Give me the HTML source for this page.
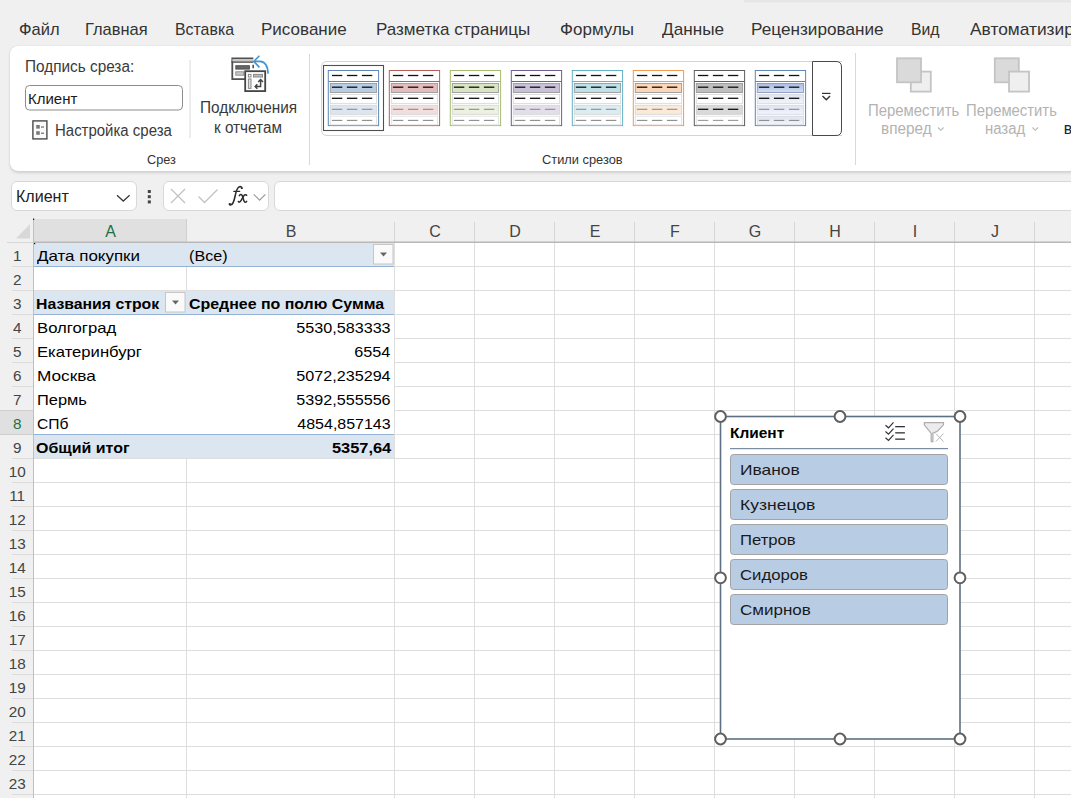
<!DOCTYPE html>
<html><head><meta charset="utf-8"><style>
html,body{margin:0;padding:0}
body{width:1071px;height:798px;overflow:hidden;position:relative;background:#f0f0f0;font-family:"Liberation Sans",sans-serif}
.abs{position:absolute}
.tx{position:absolute;white-space:nowrap;line-height:1.1172em}
svg{position:absolute;left:0;top:0}
</style></head><body>

<div class="abs" style="left:10px;top:46px;width:1100px;height:125px;background:#fff;border-radius:8px;box-shadow:0 1.5px 3px rgba(0,0,0,0.13),0 0 1px rgba(0,0,0,0.12)"></div>
<div class="abs" style="left:10.5px;top:181px;width:124.5px;height:28px;background:#fff;border:1px solid #d8d8d8;border-radius:6px"></div>
<div class="abs" style="left:162.5px;top:181px;width:104.5px;height:28px;background:#fff;border:1px solid #d8d8d8;border-radius:6px"></div>
<div class="abs" style="left:274px;top:181px;width:900px;height:28px;background:#fff;border:1px solid #d8d8d8;border-radius:6px"></div>
<svg width="1071" height="798" viewBox="0 0 1071 798"><defs><linearGradient id="g8a" x1="0" y1="0" x2="0" y2="1"><stop offset="0" stop-color="#a9bde6"/><stop offset="1" stop-color="#d5def2"/></linearGradient><linearGradient id="g8b" x1="0" y1="0" x2="0" y2="1"><stop offset="0" stop-color="#dde3f0"/><stop offset="1" stop-color="#f3f5fa"/></linearGradient></defs><rect x="744" y="0" width="327" height="2.5" fill="#e6e6e6"/>
<rect x="189.5" y="60" width="1" height="78" fill="#d9d9d9"/>
<rect x="309" y="54" width="1" height="111" fill="#d9d9d9"/>
<rect x="855" y="53" width="1" height="112" fill="#d9d9d9"/>
<rect x="25.5" y="85.5" width="157" height="24.5" rx="4" fill="#fff" stroke="#8c8c8c" stroke-width="1"/>
<rect x="32.9" y="120.9" width="14" height="18" fill="#fafafa" stroke="#4a4a4a" stroke-width="1.4"/>
<rect x="36.2" y="125" width="3.6" height="3.6" fill="#7a7a7a"/><rect x="36.2" y="131.2" width="3.6" height="3.6" fill="#7a7a7a"/>
<rect x="41" y="126.3" width="3" height="1.5" fill="#888"/><rect x="41" y="132.5" width="3" height="1.5" fill="#888"/>
<g>
<rect x="232.3" y="58.3" width="21" height="20.8" fill="#fff"/><path d="M253.3 58.3 H232.3 V79.1 H245" fill="none" stroke="#505050" stroke-width="1.8"/>
<rect x="232.3" y="59.2" width="21" height="2.2" fill="#c4c4c4"/>
<rect x="231.4" y="61.4" width="21.9" height="1.4" fill="#505050"/>
<rect x="235.8" y="65.7" width="13.6" height="3.4" fill="#666" stroke="#4a4a4a" stroke-width="0.9"/>
<rect x="235.8" y="71.8" width="8" height="3.4" fill="#c8c8c8" stroke="#8a8a8a" stroke-width="0.9"/>
<rect x="252.4" y="64.8" width="1.6" height="3.4" fill="#505050"/>
<rect x="245.2" y="71.2" width="20" height="19.9" fill="#fff" stroke="#444" stroke-width="1.8"/>
<rect x="248.4" y="74.4" width="2.6" height="2.6" fill="#fff" stroke="#8a8a8a" stroke-width="1"/>
<rect x="253.5" y="74.4" width="9" height="2.6" fill="#bbb" stroke="#8a8a8a" stroke-width="1"/>
<rect x="248.4" y="79" width="2.6" height="9.4" fill="#ddd" stroke="#8a8a8a" stroke-width="1"/>
<path d="M260.6 79.8 V86.6 H255.2" fill="none" stroke="#444" stroke-width="1.5"/>
<path d="M258.2 82 L260.6 79.6 L263 82" fill="none" stroke="#444" stroke-width="1.5"/>
<path d="M257.4 84.4 L255.2 86.6 L257.4 88.8" fill="none" stroke="#444" stroke-width="1.5"/>
<path d="M254 61.4 H260 Q268 62 268 73.8" fill="none" stroke="#4495d4" stroke-width="1.6"/>
<path d="M259.4 55.8 L253.8 61.4 L259.4 67.4" fill="none" stroke="#4495d4" stroke-width="1.6"/>
</g>
<path d="M842 61.5 H327 Q321.5 61.5 321.5 67 V130 Q321.5 135.5 327 135.5 H842" fill="#fff" stroke="#d4d4d4" stroke-width="1"/>
<path d="M812.5 61.5 H836 Q841.5 61.5 841.5 67 V130 Q841.5 135.5 836 135.5 H812.5 Z" fill="#fff" stroke="#4a4a4a" stroke-width="1"/>
<rect x="822" y="92.8" width="8.5" height="1.2" fill="#333"/><path d="M822.5 96 L826.3 99.8 L830 96" fill="none" stroke="#333" stroke-width="1.4"/>
<rect x="323.5" y="65.5" width="60" height="65" fill="#fff" stroke="#505050" stroke-width="1.1"/>
<rect x="328.3" y="70.5" width="50.3" height="55.1" fill="#fff" stroke="#5f86b8" stroke-width="1"/>
<rect x="328.3" y="81" width="50.3" height="1" fill="#5f86b8"/>
<rect x="330.3" y="83.5" width="46.3" height="9.0" fill="#b8cce4" stroke="#9a9a9a" stroke-width="0.9"/>
<rect x="330.3" y="94.4" width="46.3" height="9.0" fill="#fff" stroke="#dadada" stroke-width="0.9"/>
<rect x="330.3" y="105.3" width="46.3" height="9.0" fill="#dde6f0" stroke="#d6d6d6" stroke-width="0.9"/>
<rect x="330.3" y="116.2" width="46.3" height="8.6" fill="#fff" stroke="#e0e0e0" stroke-width="0.9"/>
<rect x="331.9" y="74.85" width="10.4" height="1.3" fill="#111"/>
<rect x="346.9" y="74.85" width="10.4" height="1.3" fill="#111"/>
<rect x="361.9" y="74.85" width="10.4" height="1.3" fill="#111"/>
<rect x="331.9" y="86.55" width="10.4" height="1.3" fill="#111"/>
<rect x="346.9" y="86.55" width="10.4" height="1.3" fill="#111"/>
<rect x="361.9" y="86.55" width="10.4" height="1.3" fill="#111"/>
<rect x="331.9" y="97.65" width="10.4" height="1.3" fill="#111"/>
<rect x="346.9" y="97.65" width="10.4" height="1.3" fill="#111"/>
<rect x="361.9" y="97.65" width="10.4" height="1.3" fill="#111"/>
<rect x="331.9" y="108.75" width="10.4" height="1.1" fill="#8c8c8c"/>
<rect x="346.9" y="108.75" width="10.4" height="1.1" fill="#8c8c8c"/>
<rect x="361.9" y="108.75" width="10.4" height="1.1" fill="#8c8c8c"/>
<rect x="331.9" y="119.85" width="10.4" height="1.1" fill="#8c8c8c"/>
<rect x="346.9" y="119.85" width="10.4" height="1.1" fill="#8c8c8c"/>
<rect x="361.9" y="119.85" width="10.4" height="1.1" fill="#8c8c8c"/>
<rect x="389.3" y="70.5" width="50.3" height="55.1" fill="#fff" stroke="#b95d5a" stroke-width="1"/>
<rect x="389.3" y="81" width="50.3" height="1" fill="#b95d5a"/>
<rect x="391.3" y="83.5" width="46.3" height="9.0" fill="#e4bcbb" stroke="#9a9a9a" stroke-width="0.9"/>
<rect x="391.3" y="94.4" width="46.3" height="9.0" fill="#fff" stroke="#dadada" stroke-width="0.9"/>
<rect x="391.3" y="105.3" width="46.3" height="9.0" fill="#f2dedd" stroke="#d6d6d6" stroke-width="0.9"/>
<rect x="391.3" y="116.2" width="46.3" height="8.6" fill="#fff" stroke="#e0e0e0" stroke-width="0.9"/>
<rect x="392.9" y="74.85" width="10.4" height="1.3" fill="#111"/>
<rect x="407.9" y="74.85" width="10.4" height="1.3" fill="#111"/>
<rect x="422.9" y="74.85" width="10.4" height="1.3" fill="#111"/>
<rect x="392.9" y="86.55" width="10.4" height="1.3" fill="#111"/>
<rect x="407.9" y="86.55" width="10.4" height="1.3" fill="#111"/>
<rect x="422.9" y="86.55" width="10.4" height="1.3" fill="#111"/>
<rect x="392.9" y="97.65" width="10.4" height="1.3" fill="#111"/>
<rect x="407.9" y="97.65" width="10.4" height="1.3" fill="#111"/>
<rect x="422.9" y="97.65" width="10.4" height="1.3" fill="#111"/>
<rect x="392.9" y="108.75" width="10.4" height="1.1" fill="#8c8c8c"/>
<rect x="407.9" y="108.75" width="10.4" height="1.1" fill="#8c8c8c"/>
<rect x="422.9" y="108.75" width="10.4" height="1.1" fill="#8c8c8c"/>
<rect x="392.9" y="119.85" width="10.4" height="1.1" fill="#8c8c8c"/>
<rect x="407.9" y="119.85" width="10.4" height="1.1" fill="#8c8c8c"/>
<rect x="422.9" y="119.85" width="10.4" height="1.1" fill="#8c8c8c"/>
<rect x="450.3" y="70.5" width="50.3" height="55.1" fill="#fff" stroke="#a5bd6b" stroke-width="1"/>
<rect x="450.3" y="81" width="50.3" height="1" fill="#a5bd6b"/>
<rect x="452.3" y="83.5" width="46.3" height="9.0" fill="#d9e4c2" stroke="#9a9a9a" stroke-width="0.9"/>
<rect x="452.3" y="94.4" width="46.3" height="9.0" fill="#fff" stroke="#dadada" stroke-width="0.9"/>
<rect x="452.3" y="105.3" width="46.3" height="9.0" fill="#ecf1e0" stroke="#d6d6d6" stroke-width="0.9"/>
<rect x="452.3" y="116.2" width="46.3" height="8.6" fill="#fff" stroke="#e0e0e0" stroke-width="0.9"/>
<rect x="453.9" y="74.85" width="10.4" height="1.3" fill="#111"/>
<rect x="468.9" y="74.85" width="10.4" height="1.3" fill="#111"/>
<rect x="483.9" y="74.85" width="10.4" height="1.3" fill="#111"/>
<rect x="453.9" y="86.55" width="10.4" height="1.3" fill="#111"/>
<rect x="468.9" y="86.55" width="10.4" height="1.3" fill="#111"/>
<rect x="483.9" y="86.55" width="10.4" height="1.3" fill="#111"/>
<rect x="453.9" y="97.65" width="10.4" height="1.3" fill="#111"/>
<rect x="468.9" y="97.65" width="10.4" height="1.3" fill="#111"/>
<rect x="483.9" y="97.65" width="10.4" height="1.3" fill="#111"/>
<rect x="453.9" y="108.75" width="10.4" height="1.1" fill="#8c8c8c"/>
<rect x="468.9" y="108.75" width="10.4" height="1.1" fill="#8c8c8c"/>
<rect x="483.9" y="108.75" width="10.4" height="1.1" fill="#8c8c8c"/>
<rect x="453.9" y="119.85" width="10.4" height="1.1" fill="#8c8c8c"/>
<rect x="468.9" y="119.85" width="10.4" height="1.1" fill="#8c8c8c"/>
<rect x="483.9" y="119.85" width="10.4" height="1.1" fill="#8c8c8c"/>
<rect x="511.3" y="70.5" width="50.3" height="55.1" fill="#fff" stroke="#6f5f93" stroke-width="1"/>
<rect x="511.3" y="81" width="50.3" height="1" fill="#6f5f93"/>
<rect x="513.3" y="83.5" width="46.3" height="9.0" fill="#c9c0d9" stroke="#9a9a9a" stroke-width="0.9"/>
<rect x="513.3" y="94.4" width="46.3" height="9.0" fill="#fff" stroke="#dadada" stroke-width="0.9"/>
<rect x="513.3" y="105.3" width="46.3" height="9.0" fill="#e3dfea" stroke="#d6d6d6" stroke-width="0.9"/>
<rect x="513.3" y="116.2" width="46.3" height="8.6" fill="#fff" stroke="#e0e0e0" stroke-width="0.9"/>
<rect x="514.9" y="74.85" width="10.4" height="1.3" fill="#111"/>
<rect x="529.9" y="74.85" width="10.4" height="1.3" fill="#111"/>
<rect x="544.9" y="74.85" width="10.4" height="1.3" fill="#111"/>
<rect x="514.9" y="86.55" width="10.4" height="1.3" fill="#111"/>
<rect x="529.9" y="86.55" width="10.4" height="1.3" fill="#111"/>
<rect x="544.9" y="86.55" width="10.4" height="1.3" fill="#111"/>
<rect x="514.9" y="97.65" width="10.4" height="1.3" fill="#111"/>
<rect x="529.9" y="97.65" width="10.4" height="1.3" fill="#111"/>
<rect x="544.9" y="97.65" width="10.4" height="1.3" fill="#111"/>
<rect x="514.9" y="108.75" width="10.4" height="1.1" fill="#8c8c8c"/>
<rect x="529.9" y="108.75" width="10.4" height="1.1" fill="#8c8c8c"/>
<rect x="544.9" y="108.75" width="10.4" height="1.1" fill="#8c8c8c"/>
<rect x="514.9" y="119.85" width="10.4" height="1.1" fill="#8c8c8c"/>
<rect x="529.9" y="119.85" width="10.4" height="1.1" fill="#8c8c8c"/>
<rect x="544.9" y="119.85" width="10.4" height="1.1" fill="#8c8c8c"/>
<rect x="572.3" y="70.5" width="50.3" height="55.1" fill="#fff" stroke="#62b2c8" stroke-width="1"/>
<rect x="572.3" y="81" width="50.3" height="1" fill="#62b2c8"/>
<rect x="574.3" y="83.5" width="46.3" height="9.0" fill="#bde0e9" stroke="#9a9a9a" stroke-width="0.9"/>
<rect x="574.3" y="94.4" width="46.3" height="9.0" fill="#fff" stroke="#dadada" stroke-width="0.9"/>
<rect x="574.3" y="105.3" width="46.3" height="9.0" fill="#dcedf2" stroke="#d6d6d6" stroke-width="0.9"/>
<rect x="574.3" y="116.2" width="46.3" height="8.6" fill="#fff" stroke="#e0e0e0" stroke-width="0.9"/>
<rect x="575.9" y="74.85" width="10.4" height="1.3" fill="#111"/>
<rect x="590.9" y="74.85" width="10.4" height="1.3" fill="#111"/>
<rect x="605.9" y="74.85" width="10.4" height="1.3" fill="#111"/>
<rect x="575.9" y="86.55" width="10.4" height="1.3" fill="#111"/>
<rect x="590.9" y="86.55" width="10.4" height="1.3" fill="#111"/>
<rect x="605.9" y="86.55" width="10.4" height="1.3" fill="#111"/>
<rect x="575.9" y="97.65" width="10.4" height="1.3" fill="#111"/>
<rect x="590.9" y="97.65" width="10.4" height="1.3" fill="#111"/>
<rect x="605.9" y="97.65" width="10.4" height="1.3" fill="#111"/>
<rect x="575.9" y="108.75" width="10.4" height="1.1" fill="#8c8c8c"/>
<rect x="590.9" y="108.75" width="10.4" height="1.1" fill="#8c8c8c"/>
<rect x="605.9" y="108.75" width="10.4" height="1.1" fill="#8c8c8c"/>
<rect x="575.9" y="119.85" width="10.4" height="1.1" fill="#8c8c8c"/>
<rect x="590.9" y="119.85" width="10.4" height="1.1" fill="#8c8c8c"/>
<rect x="605.9" y="119.85" width="10.4" height="1.1" fill="#8c8c8c"/>
<rect x="633.3" y="70.5" width="50.3" height="55.1" fill="#fff" stroke="#f09a55" stroke-width="1"/>
<rect x="633.3" y="81" width="50.3" height="1" fill="#f09a55"/>
<rect x="635.3" y="83.5" width="46.3" height="9.0" fill="#fbd6b8" stroke="#9a9a9a" stroke-width="0.9"/>
<rect x="635.3" y="94.4" width="46.3" height="9.0" fill="#fff" stroke="#dadada" stroke-width="0.9"/>
<rect x="635.3" y="105.3" width="46.3" height="9.0" fill="#fcead9" stroke="#d6d6d6" stroke-width="0.9"/>
<rect x="635.3" y="116.2" width="46.3" height="8.6" fill="#fff" stroke="#e0e0e0" stroke-width="0.9"/>
<rect x="636.9" y="74.85" width="10.4" height="1.3" fill="#111"/>
<rect x="651.9" y="74.85" width="10.4" height="1.3" fill="#111"/>
<rect x="666.9" y="74.85" width="10.4" height="1.3" fill="#111"/>
<rect x="636.9" y="86.55" width="10.4" height="1.3" fill="#111"/>
<rect x="651.9" y="86.55" width="10.4" height="1.3" fill="#111"/>
<rect x="666.9" y="86.55" width="10.4" height="1.3" fill="#111"/>
<rect x="636.9" y="97.65" width="10.4" height="1.3" fill="#111"/>
<rect x="651.9" y="97.65" width="10.4" height="1.3" fill="#111"/>
<rect x="666.9" y="97.65" width="10.4" height="1.3" fill="#111"/>
<rect x="636.9" y="108.75" width="10.4" height="1.1" fill="#8c8c8c"/>
<rect x="651.9" y="108.75" width="10.4" height="1.1" fill="#8c8c8c"/>
<rect x="666.9" y="108.75" width="10.4" height="1.1" fill="#8c8c8c"/>
<rect x="636.9" y="119.85" width="10.4" height="1.1" fill="#8c8c8c"/>
<rect x="651.9" y="119.85" width="10.4" height="1.1" fill="#8c8c8c"/>
<rect x="666.9" y="119.85" width="10.4" height="1.1" fill="#8c8c8c"/>
<rect x="694.3" y="70.5" width="50.3" height="55.1" fill="#fff" stroke="#5e5e5e" stroke-width="1"/>
<rect x="694.3" y="81" width="50.3" height="1" fill="#5e5e5e"/>
<rect x="696.3" y="83.5" width="46.3" height="9.0" fill="#bfbfbf" stroke="#9a9a9a" stroke-width="0.9"/>
<rect x="696.3" y="94.4" width="46.3" height="9.0" fill="#fff" stroke="#dadada" stroke-width="0.9"/>
<rect x="696.3" y="105.3" width="46.3" height="9.0" fill="#d9d9d9" stroke="#d0d0d0" stroke-width="0.9"/>
<rect x="696.3" y="116.2" width="46.3" height="8.6" fill="#fff" stroke="#e0e0e0" stroke-width="0.9"/>
<rect x="697.9" y="74.85" width="10.4" height="1.3" fill="#111"/>
<rect x="712.9" y="74.85" width="10.4" height="1.3" fill="#111"/>
<rect x="727.9" y="74.85" width="10.4" height="1.3" fill="#111"/>
<rect x="697.9" y="86.55" width="10.4" height="1.3" fill="#111"/>
<rect x="712.9" y="86.55" width="10.4" height="1.3" fill="#111"/>
<rect x="727.9" y="86.55" width="10.4" height="1.3" fill="#111"/>
<rect x="697.9" y="97.65" width="10.4" height="1.3" fill="#111"/>
<rect x="712.9" y="97.65" width="10.4" height="1.3" fill="#111"/>
<rect x="727.9" y="97.65" width="10.4" height="1.3" fill="#111"/>
<rect x="697.9" y="108.65" width="10.4" height="1.3" fill="#111"/>
<rect x="712.9" y="108.65" width="10.4" height="1.3" fill="#111"/>
<rect x="727.9" y="108.65" width="10.4" height="1.3" fill="#111"/>
<rect x="697.9" y="119.85" width="10.4" height="1.1" fill="#9a9a9a"/>
<rect x="712.9" y="119.85" width="10.4" height="1.1" fill="#9a9a9a"/>
<rect x="727.9" y="119.85" width="10.4" height="1.1" fill="#9a9a9a"/>
<rect x="755.3" y="70.5" width="50.3" height="55.1" fill="#fff" stroke="#5f86b8" stroke-width="1"/>
<rect x="755.3" y="81" width="50.3" height="1" fill="#5f86b8"/>
<rect x="757.3" y="83.5" width="46.3" height="9.0" fill="url(#g8a)" stroke="#8a9ab8" stroke-width="0.9"/>
<rect x="757.3" y="94.4" width="46.3" height="9.0" fill="url(#g8b)" stroke="#d6dbe6" stroke-width="0.9"/>
<rect x="757.3" y="105.3" width="46.3" height="9.0" fill="url(#g8b)" stroke="#d6dbe6" stroke-width="0.9"/>
<rect x="757.3" y="116.2" width="46.3" height="8.6" fill="url(#g8b)" stroke="#d6dbe6" stroke-width="0.9"/>
<rect x="758.9" y="74.85" width="10.4" height="1.3" fill="#111"/>
<rect x="773.9" y="74.85" width="10.4" height="1.3" fill="#111"/>
<rect x="788.9" y="74.85" width="10.4" height="1.3" fill="#111"/>
<rect x="758.9" y="86.55" width="10.4" height="1.3" fill="#111"/>
<rect x="773.9" y="86.55" width="10.4" height="1.3" fill="#111"/>
<rect x="788.9" y="86.55" width="10.4" height="1.3" fill="#111"/>
<rect x="758.9" y="97.65" width="10.4" height="1.3" fill="#111"/>
<rect x="773.9" y="97.65" width="10.4" height="1.3" fill="#111"/>
<rect x="788.9" y="97.65" width="10.4" height="1.3" fill="#111"/>
<rect x="758.9" y="108.75" width="10.4" height="1.1" fill="#8c8c8c"/>
<rect x="773.9" y="108.75" width="10.4" height="1.1" fill="#8c8c8c"/>
<rect x="788.9" y="108.75" width="10.4" height="1.1" fill="#8c8c8c"/>
<rect x="758.9" y="119.85" width="10.4" height="1.1" fill="#8c8c8c"/>
<rect x="773.9" y="119.85" width="10.4" height="1.1" fill="#8c8c8c"/>
<rect x="788.9" y="119.85" width="10.4" height="1.1" fill="#8c8c8c"/>
<rect x="910.8" y="71.6" width="20" height="20" fill="#efefef" stroke="#c4c4c4" stroke-width="1.8"/>
<rect x="897" y="58.3" width="24" height="24" fill="#dadada" stroke="#c4c4c4" stroke-width="1.8"/>
<rect x="994.8" y="58.3" width="24" height="24" fill="#dadada" stroke="#c4c4c4" stroke-width="1.8"/>
<rect x="1009" y="71.6" width="20" height="20" fill="#efefef" stroke="#c4c4c4" stroke-width="1.8"/>
<path d="M938 127.5 L940.8 130.3 L943.6 127.5" fill="none" stroke="#b8b8b8" stroke-width="1.1"/>
<path d="M1032.5 127.5 L1035.3 130.3 L1038.1 127.5" fill="none" stroke="#b8b8b8" stroke-width="1.1"/>
<path d="M117 195.2 L123.3 201 L129.6 195.2" fill="none" stroke="#3a3a3a" stroke-width="1.3"/>
<rect x="147.8" y="190" width="3" height="3" fill="#444"/><rect x="147.8" y="195.2" width="3" height="3" fill="#444"/><rect x="147.8" y="200.4" width="3" height="3" fill="#444"/>
<path d="M171 189 L185 203 M185 189 L171 203" stroke="#c2c2c2" stroke-width="1.3" fill="none"/>
<path d="M198.5 196.5 L204.5 202.5 L217.5 189.5" stroke="#c2c2c2" stroke-width="1.3" fill="none"/>
<path d="M253.8 194.3 L259.6 200.1 L265.4 194.3" fill="none" stroke="#9a9a9a" stroke-width="1.2"/>
<rect x="34" y="219" width="152" height="23" fill="#e0e0e0"/>
<rect x="394" y="222" width="1" height="20" fill="#d6d6d6"/>
<rect x="474" y="222" width="1" height="20" fill="#d6d6d6"/>
<rect x="554" y="222" width="1" height="20" fill="#d6d6d6"/>
<rect x="634" y="222" width="1" height="20" fill="#d6d6d6"/>
<rect x="714" y="222" width="1" height="20" fill="#d6d6d6"/>
<rect x="794" y="222" width="1" height="20" fill="#d6d6d6"/>
<rect x="874" y="222" width="1" height="20" fill="#d6d6d6"/>
<rect x="954" y="222" width="1" height="20" fill="#d6d6d6"/>
<rect x="1034" y="222" width="1" height="20" fill="#d6d6d6"/>
<rect x="186" y="219" width="1" height="23" fill="#d0d0d0"/>
<rect x="34" y="241.5" width="1037" height="1.5" fill="#b8b8b8"/><rect x="7" y="242" width="26" height="1" fill="#d6d6d6"/>
<path d="M30 224 L30 238.6 L16 238.6 Z" fill="#d8d8d8"/>
<rect x="33" y="219" width="1" height="579" fill="#bfbfbf"/>
<rect x="33" y="218.5" width="1.2" height="1.5" fill="#222"/>
<rect x="34" y="243" width="1037" height="555" fill="#fff"/>
<rect x="34" y="266" width="1037" height="1" fill="#dedede"/>
<rect x="34" y="290" width="1037" height="1" fill="#dedede"/>
<rect x="34" y="314" width="1037" height="1" fill="#dedede"/>
<rect x="34" y="338" width="1037" height="1" fill="#dedede"/>
<rect x="34" y="362" width="1037" height="1" fill="#dedede"/>
<rect x="34" y="386" width="1037" height="1" fill="#dedede"/>
<rect x="34" y="410" width="1037" height="1" fill="#dedede"/>
<rect x="34" y="434" width="1037" height="1" fill="#dedede"/>
<rect x="34" y="458" width="1037" height="1" fill="#dedede"/>
<rect x="34" y="482" width="1037" height="1" fill="#dedede"/>
<rect x="34" y="506" width="1037" height="1" fill="#dedede"/>
<rect x="34" y="530" width="1037" height="1" fill="#dedede"/>
<rect x="34" y="554" width="1037" height="1" fill="#dedede"/>
<rect x="34" y="578" width="1037" height="1" fill="#dedede"/>
<rect x="34" y="602" width="1037" height="1" fill="#dedede"/>
<rect x="34" y="626" width="1037" height="1" fill="#dedede"/>
<rect x="34" y="650" width="1037" height="1" fill="#dedede"/>
<rect x="34" y="674" width="1037" height="1" fill="#dedede"/>
<rect x="34" y="698" width="1037" height="1" fill="#dedede"/>
<rect x="34" y="722" width="1037" height="1" fill="#dedede"/>
<rect x="34" y="746" width="1037" height="1" fill="#dedede"/>
<rect x="34" y="770" width="1037" height="1" fill="#dedede"/>
<rect x="34" y="794" width="1037" height="1" fill="#dedede"/>
<rect x="186" y="243" width="1" height="555" fill="#dedede"/>
<rect x="394" y="243" width="1" height="555" fill="#dedede"/>
<rect x="474" y="243" width="1" height="555" fill="#dedede"/>
<rect x="554" y="243" width="1" height="555" fill="#dedede"/>
<rect x="634" y="243" width="1" height="555" fill="#dedede"/>
<rect x="714" y="243" width="1" height="555" fill="#dedede"/>
<rect x="794" y="243" width="1" height="555" fill="#dedede"/>
<rect x="874" y="243" width="1" height="555" fill="#dedede"/>
<rect x="954" y="243" width="1" height="555" fill="#dedede"/>
<rect x="1034" y="243" width="1" height="555" fill="#dedede"/>
<rect x="12" y="266" width="21" height="1" fill="#dcdcdc"/>
<rect x="12" y="290" width="21" height="1" fill="#dcdcdc"/>
<rect x="12" y="314" width="21" height="1" fill="#dcdcdc"/>
<rect x="12" y="338" width="21" height="1" fill="#dcdcdc"/>
<rect x="12" y="362" width="21" height="1" fill="#dcdcdc"/>
<rect x="12" y="386" width="21" height="1" fill="#dcdcdc"/>
<rect x="12" y="410" width="21" height="1" fill="#dcdcdc"/>
<rect x="12" y="434" width="21" height="1" fill="#dcdcdc"/>
<rect x="12" y="458" width="21" height="1" fill="#dcdcdc"/>
<rect x="12" y="482" width="21" height="1" fill="#dcdcdc"/>
<rect x="12" y="506" width="21" height="1" fill="#dcdcdc"/>
<rect x="12" y="530" width="21" height="1" fill="#dcdcdc"/>
<rect x="12" y="554" width="21" height="1" fill="#dcdcdc"/>
<rect x="12" y="578" width="21" height="1" fill="#dcdcdc"/>
<rect x="12" y="602" width="21" height="1" fill="#dcdcdc"/>
<rect x="12" y="626" width="21" height="1" fill="#dcdcdc"/>
<rect x="12" y="650" width="21" height="1" fill="#dcdcdc"/>
<rect x="12" y="674" width="21" height="1" fill="#dcdcdc"/>
<rect x="12" y="698" width="21" height="1" fill="#dcdcdc"/>
<rect x="12" y="722" width="21" height="1" fill="#dcdcdc"/>
<rect x="12" y="746" width="21" height="1" fill="#dcdcdc"/>
<rect x="12" y="770" width="21" height="1" fill="#dcdcdc"/>
<rect x="12" y="794" width="21" height="1" fill="#dcdcdc"/>
<rect x="0" y="410" width="33" height="24" fill="#e0e0e0"/>
<rect x="0" y="410" width="33" height="1" fill="#cfcfcf"/><rect x="0" y="434" width="33" height="1" fill="#cfcfcf"/>
<rect x="34" y="243" width="360" height="23" fill="#dce6f1"/>
<rect x="34" y="266" width="360" height="1" fill="#95b3d7"/>
<rect x="34" y="291" width="360" height="23" fill="#dce6f1"/>
<rect x="34" y="314" width="360" height="1" fill="#95b3d7"/>
<rect x="34" y="315" width="360" height="119" fill="#fff"/>
<rect x="34" y="434" width="360" height="1" fill="#95b3d7"/>
<rect x="34" y="435" width="360" height="23" fill="#dce6f1"/>
<rect x="373.5" y="244.5" width="19.5" height="19.5" fill="#fafafa" stroke="#c6c6c6" stroke-width="1"/>
<path d="M380 252.5 L387 252.5 L383.5 256.5 Z" fill="#666"/>
<rect x="165.5" y="292.5" width="19.5" height="19.5" fill="#fafafa" stroke="#c6c6c6" stroke-width="1"/>
<path d="M172 300.5 L179 300.5 L175.5 304.5 Z" fill="#666"/>
<rect x="34" y="243" width="1.2" height="1.2" fill="#111"/>
<rect x="720.5" y="416.5" width="239.5" height="322.5" fill="#fff" stroke="#5e7083" stroke-width="1.6"/>
<rect x="730" y="448" width="218" height="1.2" fill="#7b8da3"/>
<rect x="730.5" y="454.5" width="217" height="30" rx="3" fill="#b8cce4" stroke="#a3a3a3" stroke-width="1"/>
<rect x="730.5" y="489.5" width="217" height="30" rx="3" fill="#b8cce4" stroke="#a3a3a3" stroke-width="1"/>
<rect x="730.5" y="524.5" width="217" height="30" rx="3" fill="#b8cce4" stroke="#a3a3a3" stroke-width="1"/>
<rect x="730.5" y="559.5" width="217" height="30" rx="3" fill="#b8cce4" stroke="#a3a3a3" stroke-width="1"/>
<rect x="730.5" y="594.5" width="217" height="30" rx="3" fill="#b8cce4" stroke="#a3a3a3" stroke-width="1"/>
<path d="M885.5 425.2 L888.5 427.8 L893.5 422.3" fill="none" stroke="#333" stroke-width="1.2"/>
<rect x="895.2" y="426.0" width="9.7" height="1.3" fill="#333"/>
<path d="M885.5 431.5 L888.5 434.1 L893.5 428.6" fill="none" stroke="#333" stroke-width="1.2"/>
<rect x="895.2" y="432.2" width="9.7" height="1.3" fill="#333"/>
<path d="M885.5 437.8 L888.5 440.4 L893.5 434.9" fill="none" stroke="#333" stroke-width="1.2"/>
<rect x="895.2" y="438.5" width="9.7" height="1.3" fill="#333"/>
<path d="M924.3 422.6 H943.5 V424.8 L937.3 431.2 L932.9 433.2 V441.6 H931.2 V433.4 L924.3 424.8 Z" fill="#ececec" stroke="#adadad" stroke-width="1.2" stroke-linejoin="miter"/>
<path d="M935.8 433.5 L943.6 441.6 M943.6 433.5 L935.8 441.6" stroke="#b8b8b8" stroke-width="1" fill="none"/>
<circle cx="720.5" cy="416.5" r="5.4" fill="#fff" stroke="#5f5f5f" stroke-width="2"/>
<circle cx="840.0" cy="416.5" r="5.4" fill="#fff" stroke="#5f5f5f" stroke-width="2"/>
<circle cx="960.0" cy="416.5" r="5.4" fill="#fff" stroke="#5f5f5f" stroke-width="2"/>
<circle cx="720.5" cy="577.8" r="5.4" fill="#fff" stroke="#5f5f5f" stroke-width="2"/>
<circle cx="960.0" cy="577.8" r="5.4" fill="#fff" stroke="#5f5f5f" stroke-width="2"/>
<circle cx="720.5" cy="739.0" r="5.4" fill="#fff" stroke="#5f5f5f" stroke-width="2"/>
<circle cx="840.0" cy="739.0" r="5.4" fill="#fff" stroke="#5f5f5f" stroke-width="2"/>
<circle cx="960.0" cy="739.0" r="5.4" fill="#fff" stroke="#5f5f5f" stroke-width="2"/>
<g fill="none" stroke="#2a2a2a" stroke-linecap="round"><path d="M241.9 188.2 C241.6 186.9 240.3 186.3 239 186.9 C236.9 188 236 191.5 235 196.5 C234 201.5 233 204.4 231 204.8 C230.1 205 229.5 204.6 229.4 204" stroke-width="1.6"/><path d="M233.9 191.4 H239.6" stroke-width="1.4"/><path d="M239.3 195.6 C240.3 194.3 241.8 194.2 242.3 195.8 L243.9 200.8 C244.4 202.4 245.6 202.6 246.6 201.4" stroke-width="1.5"/><path d="M246.7 195.2 C245.8 194.2 244.6 194.6 243.6 196.1 L241 200.6 C240.1 202.1 239 202.5 238.4 201.5" stroke-width="1.5"/><circle cx="241.7" cy="188.2" r="0.9" fill="#2a2a2a" stroke="none"/><circle cx="229.9" cy="203.9" r="1" fill="#2a2a2a" stroke="none"/></g></svg>
<div class="tx" style="left:18.53px;top:20px;font-size:17.00px;font-weight:400;color:#333333;font-family:'Liberation Sans', sans-serif;transform:scaleX(0.9700);transform-origin:left;">Файл</div>
<div class="tx" style="left:84.63px;top:20px;font-size:17.00px;font-weight:400;color:#333333;font-family:'Liberation Sans', sans-serif;transform:scaleX(0.9683);transform-origin:left;">Главная</div>
<div class="tx" style="left:174.97px;top:20px;font-size:17.00px;font-weight:400;color:#333333;font-family:'Liberation Sans', sans-serif;transform:scaleX(0.9339);transform-origin:left;">Вставка</div>
<div class="tx" style="left:261.30px;top:20px;font-size:17.00px;font-weight:400;color:#333333;font-family:'Liberation Sans', sans-serif;transform:scaleX(1.0012);transform-origin:left;">Рисование</div>
<div class="tx" style="left:376.40px;top:20px;font-size:17.00px;font-weight:400;color:#333333;font-family:'Liberation Sans', sans-serif;transform:scaleX(1.0007);transform-origin:left;">Разметка страницы</div>
<div class="tx" style="left:560.10px;top:20px;font-size:17.00px;font-weight:400;color:#333333;font-family:'Liberation Sans', sans-serif;">Формулы</div>
<div class="tx" style="left:662.10px;top:20px;font-size:17.00px;font-weight:400;color:#333333;font-family:'Liberation Sans', sans-serif;transform:scaleX(1.0098);transform-origin:left;">Данные</div>
<div class="tx" style="left:750.69px;top:20px;font-size:17.00px;font-weight:400;color:#333333;font-family:'Liberation Sans', sans-serif;transform:scaleX(1.0100);transform-origin:left;">Рецензирование</div>
<div class="tx" style="left:910.57px;top:20px;font-size:17.00px;font-weight:400;color:#333333;font-family:'Liberation Sans', sans-serif;transform:scaleX(0.9267);transform-origin:left;">Вид</div>
<div class="tx" style="left:970.20px;top:20px;font-size:17.00px;font-weight:400;color:#333333;font-family:'Liberation Sans', sans-serif;transform:scaleX(1.0200);transform-origin:left;">Автоматизировать</div>
<div class="tx" style="left:24.63px;top:58px;font-size:15.80px;font-weight:400;color:#3a3a3a;font-family:'Liberation Sans', sans-serif;transform:scaleX(0.9709);transform-origin:left;">Подпись среза:</div>
<div class="tx" style="left:27.98px;top:91px;font-size:14.70px;font-weight:400;color:#1a1a1a;font-family:'Liberation Sans', sans-serif;transform:scaleX(1.0213);transform-origin:left;">Клиент</div>
<div class="tx" style="left:54.85px;top:122px;font-size:15.80px;font-weight:400;color:#3a3a3a;font-family:'Liberation Sans', sans-serif;transform:scaleX(0.9475);transform-origin:left;">Настройка среза</div>
<div class="tx" style="left:146.51px;top:153px;font-size:12.80px;font-weight:400;color:#333;font-family:'Liberation Sans', sans-serif;transform:scaleX(0.9929);transform-origin:left;">Срез</div>
<div class="tx" style="left:199.73px;top:99px;font-size:15.80px;font-weight:400;color:#3a3a3a;font-family:'Liberation Sans', sans-serif;transform:scaleX(0.9724);transform-origin:left;">Подключения</div>
<div class="tx" style="left:214.03px;top:119px;font-size:15.80px;font-weight:400;color:#3a3a3a;font-family:'Liberation Sans', sans-serif;transform:scaleX(0.9676);transform-origin:left;">к отчетам</div>
<div class="tx" style="left:541.67px;top:154px;font-size:12.50px;font-weight:400;color:#333;font-family:'Liberation Sans', sans-serif;transform:scaleX(1.0260);transform-origin:left;">Стили срезов</div>
<div class="tx" style="left:867.76px;top:102px;font-size:15.80px;font-weight:400;color:#b3b3b3;font-family:'Liberation Sans', sans-serif;transform:scaleX(0.9432);transform-origin:left;">Переместить</div>
<div class="tx" style="left:881.03px;top:120px;font-size:15.80px;font-weight:400;color:#b3b3b3;font-family:'Liberation Sans', sans-serif;transform:scaleX(0.9725);transform-origin:left;">вперед</div>
<div class="tx" style="left:965.56px;top:102px;font-size:15.80px;font-weight:400;color:#b3b3b3;font-family:'Liberation Sans', sans-serif;transform:scaleX(0.9389);transform-origin:left;">Переместить</div>
<div class="tx" style="left:984.76px;top:120px;font-size:15.80px;font-weight:400;color:#b3b3b3;font-family:'Liberation Sans', sans-serif;transform:scaleX(0.9439);transform-origin:left;">назад</div>
<div class="tx" style="left:1063.80px;top:120px;font-size:15.80px;font-weight:400;color:#222;font-family:'Liberation Sans', sans-serif;">в</div>
<div class="tx" style="left:16.48px;top:188px;font-size:15.80px;font-weight:400;color:#222;font-family:'Liberation Sans', sans-serif;transform:scaleX(1.0157);transform-origin:left;">Клиент</div>
<div class="tx" style="left:110.50px;width:0;display:flex;justify-content:center;top:223px;font-size:16.00px;font-weight:400;color:#1d7044;font-family:'Liberation Sans', sans-serif;">A</div>
<div class="tx" style="left:291.00px;width:0;display:flex;justify-content:center;top:223px;font-size:16.00px;font-weight:400;color:#444;font-family:'Liberation Sans', sans-serif;">B</div>
<div class="tx" style="left:435.00px;width:0;display:flex;justify-content:center;top:223px;font-size:16.00px;font-weight:400;color:#444;font-family:'Liberation Sans', sans-serif;">C</div>
<div class="tx" style="left:515.00px;width:0;display:flex;justify-content:center;top:223px;font-size:16.00px;font-weight:400;color:#444;font-family:'Liberation Sans', sans-serif;">D</div>
<div class="tx" style="left:595.00px;width:0;display:flex;justify-content:center;top:223px;font-size:16.00px;font-weight:400;color:#444;font-family:'Liberation Sans', sans-serif;">E</div>
<div class="tx" style="left:675.00px;width:0;display:flex;justify-content:center;top:223px;font-size:16.00px;font-weight:400;color:#444;font-family:'Liberation Sans', sans-serif;">F</div>
<div class="tx" style="left:755.00px;width:0;display:flex;justify-content:center;top:223px;font-size:16.00px;font-weight:400;color:#444;font-family:'Liberation Sans', sans-serif;">G</div>
<div class="tx" style="left:835.00px;width:0;display:flex;justify-content:center;top:223px;font-size:16.00px;font-weight:400;color:#444;font-family:'Liberation Sans', sans-serif;">H</div>
<div class="tx" style="left:915.00px;width:0;display:flex;justify-content:center;top:223px;font-size:16.00px;font-weight:400;color:#444;font-family:'Liberation Sans', sans-serif;">I</div>
<div class="tx" style="left:995.00px;width:0;display:flex;justify-content:center;top:223px;font-size:16.00px;font-weight:400;color:#444;font-family:'Liberation Sans', sans-serif;">J</div>
<div class="tx" style="left:17.20px;width:0;display:flex;justify-content:center;top:247px;font-size:15.30px;font-weight:400;color:#444;font-family:'Liberation Sans', sans-serif;">1</div>
<div class="tx" style="left:17.20px;width:0;display:flex;justify-content:center;top:271px;font-size:15.30px;font-weight:400;color:#444;font-family:'Liberation Sans', sans-serif;">2</div>
<div class="tx" style="left:17.20px;width:0;display:flex;justify-content:center;top:295px;font-size:15.30px;font-weight:400;color:#444;font-family:'Liberation Sans', sans-serif;">3</div>
<div class="tx" style="left:17.20px;width:0;display:flex;justify-content:center;top:319px;font-size:15.30px;font-weight:400;color:#444;font-family:'Liberation Sans', sans-serif;">4</div>
<div class="tx" style="left:17.20px;width:0;display:flex;justify-content:center;top:343px;font-size:15.30px;font-weight:400;color:#444;font-family:'Liberation Sans', sans-serif;">5</div>
<div class="tx" style="left:17.20px;width:0;display:flex;justify-content:center;top:367px;font-size:15.30px;font-weight:400;color:#444;font-family:'Liberation Sans', sans-serif;">6</div>
<div class="tx" style="left:17.20px;width:0;display:flex;justify-content:center;top:391px;font-size:15.30px;font-weight:400;color:#444;font-family:'Liberation Sans', sans-serif;">7</div>
<div class="tx" style="left:17.20px;width:0;display:flex;justify-content:center;top:415px;font-size:15.30px;font-weight:400;color:#1d7044;font-family:'Liberation Sans', sans-serif;">8</div>
<div class="tx" style="left:17.20px;width:0;display:flex;justify-content:center;top:439px;font-size:15.30px;font-weight:400;color:#444;font-family:'Liberation Sans', sans-serif;">9</div>
<div class="tx" style="left:17.20px;width:0;display:flex;justify-content:center;top:463px;font-size:15.30px;font-weight:400;color:#444;font-family:'Liberation Sans', sans-serif;">10</div>
<div class="tx" style="left:17.20px;width:0;display:flex;justify-content:center;top:487px;font-size:15.30px;font-weight:400;color:#444;font-family:'Liberation Sans', sans-serif;">11</div>
<div class="tx" style="left:17.20px;width:0;display:flex;justify-content:center;top:511px;font-size:15.30px;font-weight:400;color:#444;font-family:'Liberation Sans', sans-serif;">12</div>
<div class="tx" style="left:17.20px;width:0;display:flex;justify-content:center;top:535px;font-size:15.30px;font-weight:400;color:#444;font-family:'Liberation Sans', sans-serif;">13</div>
<div class="tx" style="left:17.20px;width:0;display:flex;justify-content:center;top:559px;font-size:15.30px;font-weight:400;color:#444;font-family:'Liberation Sans', sans-serif;">14</div>
<div class="tx" style="left:17.20px;width:0;display:flex;justify-content:center;top:583px;font-size:15.30px;font-weight:400;color:#444;font-family:'Liberation Sans', sans-serif;">15</div>
<div class="tx" style="left:17.20px;width:0;display:flex;justify-content:center;top:607px;font-size:15.30px;font-weight:400;color:#444;font-family:'Liberation Sans', sans-serif;">16</div>
<div class="tx" style="left:17.20px;width:0;display:flex;justify-content:center;top:631px;font-size:15.30px;font-weight:400;color:#444;font-family:'Liberation Sans', sans-serif;">17</div>
<div class="tx" style="left:17.20px;width:0;display:flex;justify-content:center;top:655px;font-size:15.30px;font-weight:400;color:#444;font-family:'Liberation Sans', sans-serif;">18</div>
<div class="tx" style="left:17.20px;width:0;display:flex;justify-content:center;top:679px;font-size:15.30px;font-weight:400;color:#444;font-family:'Liberation Sans', sans-serif;">19</div>
<div class="tx" style="left:17.20px;width:0;display:flex;justify-content:center;top:703px;font-size:15.30px;font-weight:400;color:#444;font-family:'Liberation Sans', sans-serif;">20</div>
<div class="tx" style="left:17.20px;width:0;display:flex;justify-content:center;top:727px;font-size:15.30px;font-weight:400;color:#444;font-family:'Liberation Sans', sans-serif;">21</div>
<div class="tx" style="left:17.20px;width:0;display:flex;justify-content:center;top:751px;font-size:15.30px;font-weight:400;color:#444;font-family:'Liberation Sans', sans-serif;">22</div>
<div class="tx" style="left:17.20px;width:0;display:flex;justify-content:center;top:775px;font-size:15.30px;font-weight:400;color:#444;font-family:'Liberation Sans', sans-serif;">23</div>
<div class="tx" style="left:37.30px;top:248px;font-size:15.00px;font-weight:400;color:#000;font-family:'Liberation Sans', sans-serif;transform:scaleX(1.1300);transform-origin:left;">Дата покупки</div>
<div class="tx" style="left:188.92px;top:248px;font-size:15.00px;font-weight:400;color:#000;font-family:'Liberation Sans', sans-serif;transform:scaleX(1.0765);transform-origin:left;">(Все)</div>
<div class="tx" style="left:36.45px;top:296px;font-size:15.00px;font-weight:700;color:#000;font-family:'Liberation Sans', sans-serif;transform:scaleX(1.0534);transform-origin:left;">Названия строк</div>
<div class="tx" style="left:189.44px;top:296px;font-size:15.00px;font-weight:700;color:#000;font-family:'Liberation Sans', sans-serif;transform:scaleX(1.0612);transform-origin:left;">Среднее по полю Сумма</div>
<div class="tx" style="left:36.69px;top:320px;font-size:15.00px;font-weight:400;color:#000;font-family:'Liberation Sans', sans-serif;transform:scaleX(1.1129);transform-origin:left;">Волгоград</div>
<div class="tx" style="right:679.96px;top:320px;font-size:15.00px;font-weight:400;color:#000;font-family:'Liberation Sans', sans-serif;transform:scaleX(1.0767);transform-origin:right;">5530,583333</div>
<div class="tx" style="left:36.69px;top:344px;font-size:15.00px;font-weight:400;color:#000;font-family:'Liberation Sans', sans-serif;transform:scaleX(1.1097);transform-origin:left;">Екатеринбург</div>
<div class="tx" style="right:680.19px;top:344px;font-size:15.00px;font-weight:400;color:#000;font-family:'Liberation Sans', sans-serif;transform:scaleX(1.0844);transform-origin:right;">6554</div>
<div class="tx" style="left:36.65px;top:368px;font-size:15.00px;font-weight:400;color:#000;font-family:'Liberation Sans', sans-serif;transform:scaleX(1.1480);transform-origin:left;">Москва</div>
<div class="tx" style="right:679.96px;top:368px;font-size:15.00px;font-weight:400;color:#000;font-family:'Liberation Sans', sans-serif;transform:scaleX(1.0767);transform-origin:right;">5072,235294</div>
<div class="tx" style="left:36.71px;top:392px;font-size:15.00px;font-weight:400;color:#000;font-family:'Liberation Sans', sans-serif;transform:scaleX(1.0932);transform-origin:left;">Пермь</div>
<div class="tx" style="right:679.96px;top:392px;font-size:15.00px;font-weight:400;color:#000;font-family:'Liberation Sans', sans-serif;transform:scaleX(1.0767);transform-origin:right;">5392,555556</div>
<div class="tx" style="left:36.76px;top:416px;font-size:15.00px;font-weight:400;color:#000;font-family:'Liberation Sans', sans-serif;transform:scaleX(1.0414);transform-origin:left;">СПб</div>
<div class="tx" style="right:679.97px;top:416px;font-size:15.00px;font-weight:400;color:#000;font-family:'Liberation Sans', sans-serif;transform:scaleX(1.0644);transform-origin:right;">4854,857143</div>
<div class="tx" style="left:36.44px;top:440px;font-size:15.00px;font-weight:700;color:#000;font-family:'Liberation Sans', sans-serif;transform:scaleX(1.0632);transform-origin:left;">Общий итог</div>
<div class="tx" style="right:680.24px;top:440px;font-size:15.00px;font-weight:700;color:#000;font-family:'Liberation Sans', sans-serif;transform:scaleX(1.0943);transform-origin:right;">5357,64</div>
<div class="tx" style="left:729.51px;top:426px;font-size:14.20px;font-weight:700;color:#000;font-family:'Liberation Sans', sans-serif;transform:scaleX(1.0898);transform-origin:left;">Клиент</div>
<div class="tx" style="left:740.42px;top:462px;font-size:14.80px;font-weight:400;color:#1a1a1a;font-family:'Liberation Sans', sans-serif;transform:scaleX(1.1755);transform-origin:left;">Иванов</div>
<div class="tx" style="left:740.42px;top:497px;font-size:14.80px;font-weight:400;color:#1a1a1a;font-family:'Liberation Sans', sans-serif;transform:scaleX(1.1839);transform-origin:left;">Кузнецов</div>
<div class="tx" style="left:740.48px;top:532px;font-size:14.80px;font-weight:400;color:#1a1a1a;font-family:'Liberation Sans', sans-serif;transform:scaleX(1.1250);transform-origin:left;">Петров</div>
<div class="tx" style="left:740.47px;top:567px;font-size:14.80px;font-weight:400;color:#1a1a1a;font-family:'Liberation Sans', sans-serif;transform:scaleX(1.1305);transform-origin:left;">Сидоров</div>
<div class="tx" style="left:740.45px;top:602px;font-size:14.80px;font-weight:400;color:#1a1a1a;font-family:'Liberation Sans', sans-serif;transform:scaleX(1.1483);transform-origin:left;">Смирнов</div>
</body></html>
